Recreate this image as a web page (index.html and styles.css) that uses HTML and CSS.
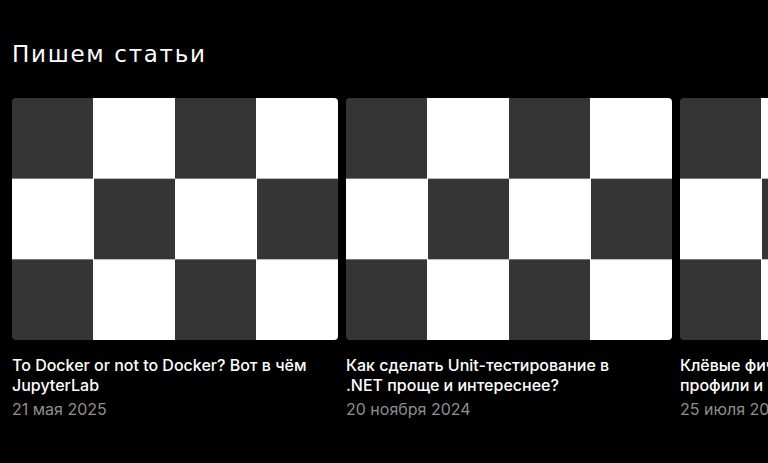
FILE: index.html
```html
<!DOCTYPE html>
<html lang="ru">
<head>
<meta charset="utf-8">
<link rel="stylesheet" href="styles.css">
</head>
<body>
<section class="articles">
  <h2 class="articles__title">Пишем статьи</h2>
  <div class="articles__list">
    <a class="card" href="#">
      <div class="card__image"></div>
      <div class="card__title">To Docker or not to Docker? Вот в чём JupyterLab</div>
      <div class="card__date">21 мая 2025</div>
    </a>
    <a class="card" href="#">
      <div class="card__image"></div>
      <div class="card__title">Как сделать Unit-тестирование в .NET проще и интереснее?</div>
      <div class="card__date">20 ноября 2024</div>
    </a>
    <a class="card" href="#">
      <div class="card__image"></div>
      <div class="card__title">Клёвые фичи JetBrains Rider:<br>профили и многое другое</div>
      <div class="card__date">25 июля 2024</div>
    </a>
  </div>
</section>
</body>
</html>
```
FILE: styles.css
```css
* { box-sizing: border-box; }
html, body {
  margin: 0;
  background: #000;
  overflow: hidden;
}
body {
  width: 768px;
  height: 463px;
  font-family: Inter, "Noto Sans", sans-serif;
  color: #fff;
}
.articles {
  padding: 37px 0 0 12px;
}
.articles__title {
  margin: 0;
  font-family: "DejaVu Sans", Inter, sans-serif;
  font-size: 23px;
  line-height: 34px;
  font-weight: 400;
  letter-spacing: 1.7px;
}
.articles__list {
  display: flex;
  gap: 8px;
  margin-top: 27px;
}
.card {
  flex: 0 0 326px;
  text-decoration: none;
  color: inherit;
}
.card__image {
  height: 242px;
  border-radius: 4px;
  background: repeating-conic-gradient(#fff 0 25%, #353535 0 50%) 0 0 / 50% 66.6667%;
}
.card__title {
  margin-top: 15px;
  padding-right: 28px;
  font-size: 16px;
  line-height: 20px;
  font-weight: 500;
}
.card__date {
  margin-top: 4px;
  font-size: 16px;
  line-height: 20px;
  color: #8f8f8f;
}
```
